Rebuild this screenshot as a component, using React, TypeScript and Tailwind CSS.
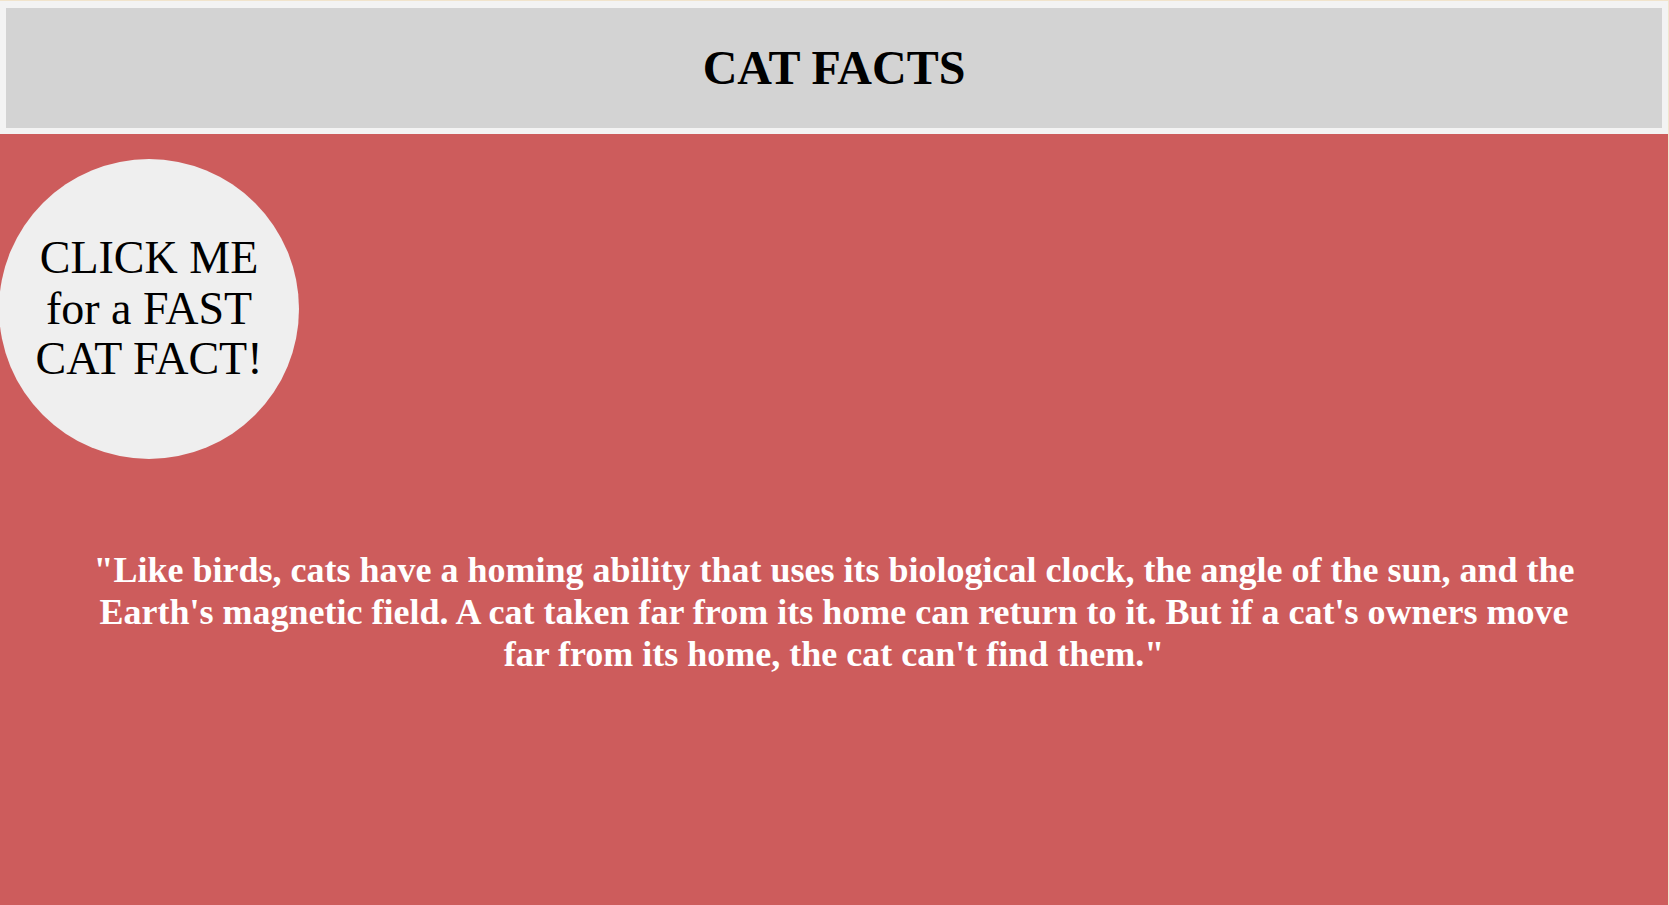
const fact =
  "\"Like birds, cats have a homing ability that uses its biological clock, the angle of the sun, and the Earth's magnetic field. A cat taken far from its home can return to it. But if a cat's owners move far from its home, the cat can't find them.\""

export default function App() {
  return (
    <div
      className="min-h-[905px] bg-[#f3f3f3] border-t border-r border-[#f1e4cc] flex flex-col"
      style={{ fontFamily: '"Liberation Serif", "Times New Roman", serif' }}
    >
      <header className="mx-[6px] mt-[7px] h-[120px] bg-[#d3d3d3] flex items-center justify-center">
        <h1 className="text-[48px] font-bold text-black leading-none">CAT FACTS</h1>
      </header>

      <main className="mt-[6px] flex-1 bg-[#cd5c5c] pt-[25px]">
        <button className="w-[300px] h-[300px] -ml-[1px] rounded-full bg-[#efefef] text-black text-[46px] leading-[1.1] px-3 cursor-pointer">
          CLICK ME for a FAST CAT FACT!
        </button>

        <p className="mt-[91px] px-[80px] text-center text-white font-bold text-[36px] leading-[1.16]">
          {fact}
        </p>
      </main>
    </div>
  )
}
